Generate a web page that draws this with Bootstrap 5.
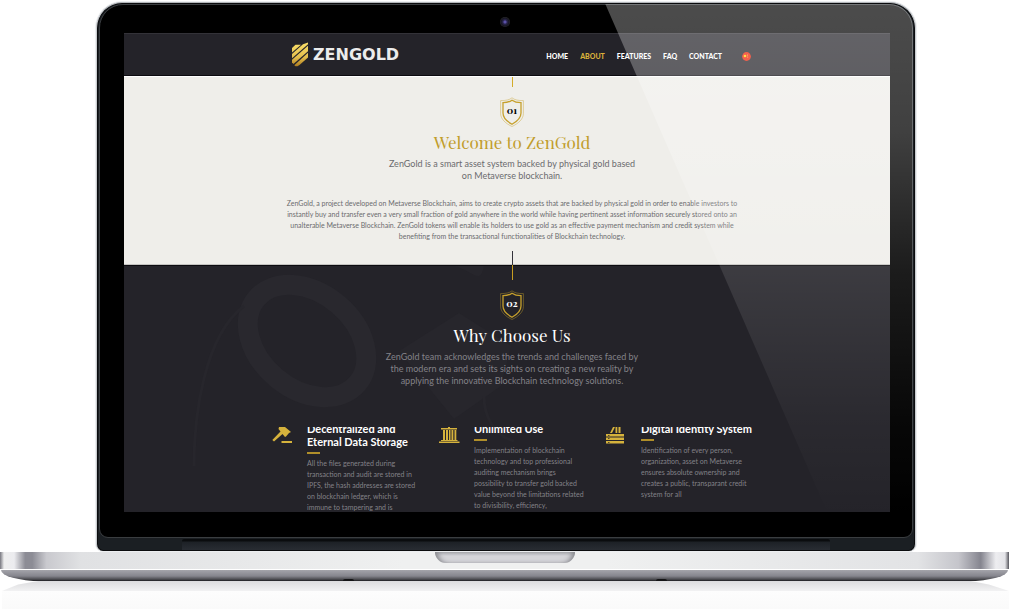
<!DOCTYPE html>
<html lang="en">
<head>
<meta charset="utf-8">
<meta name="viewport" content="width=device-width, initial-scale=1">
<title>ZenGold</title>
<link rel="stylesheet" href="https://cdn.jsdelivr.net/npm/bootstrap@5.3.0/dist/css/bootstrap.min.css">
<style>
:root{--gold:#d3ab28;--ink:#242329;--paper:#efeeea}
body{background:#fff;font-family:"Lato","Open Sans",sans-serif;font-size:7px;line-height:11px;overflow-x:hidden}
/* laptop lid */
.lid{margin:2px 95px 0 96px;background:#1b1f23;border:1px solid #c9cccf;border-top-color:#b4b7bb;border-bottom:0;border-radius:26px 26px 7px 7px;box-shadow:inset 0 0 0 1px #0b0c0e,0 0 0 1px #eceef0}
.bezel{background:#000;margin:1px 2px 0;padding:28px 22px 25px 24px;border:1px solid #3a3d40;border-radius:24px 24px 9px 9px}
.webcam{left:50%;top:14px;width:10px;height:10px;margin-left:-6px;border-radius:50%;background:radial-gradient(circle,#5b51a8 0 1px,#2b2750 2px,#15141f 4px,#2a2a2e 5px)}
.glare{inset:1px 2px 14px 2px;border-radius:0 24px 9px 0;pointer-events:none;clip-path:polygon(62.2% 0,100% 0,100% 100%,90.8% 100%);background:linear-gradient(#ffffff4c 0,#ffffff40 24%,#ffffff1c 50%,#ffffff08 78%,#fff0 96%)}
.hinge{height:13px;padding:1px 85px 0}
.hinge div{height:11px;background:linear-gradient(#0a0c0e 0 2px,#1d2126 3px,#292d33);border-radius:2px 2px 0 0}
/* site */
.site-head{background:var(--ink);height:43px;border-bottom:1px solid #0c0b10;box-shadow:inset 0 1px #333238}
.page-col{width:480px}
.site-head .page-col{padding:1px 1px 0 19px}
.wordmark{font:bold 16px/20px "DejaVu Sans",sans-serif;color:#ececec;text-decoration:none}
.menu a{font-weight:900;font-size:7px;color:#fff;text-decoration:none}
.menu a.active{color:#d9b13b}
.menu-items{gap:12px}
.flag{margin-left:20px}
.gutter-l{padding-left:10px}
.welcome{background:var(--paper);height:189px;border-top:1px solid #fff;border-bottom:1px solid #c4c3c0;color:#6b6b6e}
.why{background:var(--ink);color:#838288;height:247px;border-top:1px solid #0c0b10}
.why-body{padding-top:24px}
.tick{width:1px;margin:0 auto}
.tick-a{height:10px;background:var(--gold)}
.tick-b{top:-15px;left:50%;margin-left:5px;height:29px;background:linear-gradient(#33323a 0 14px,#c79d22 14px)}
.shield-no{width:26px;height:30px;font:bold 10px/26px "Playfair Display","Liberation Serif",serif}
.welcome .shield-no{margin-top:10px}
.shield-no svg{inset:0}
.sec-title{font:400 17px/22px "Playfair Display","Liberation Serif",serif;margin:4px 0 5px}
.sec-gold{color:#c19d2c}
.intro{font-size:9px;line-height:12px}
.copy{font-size:7px;line-height:11px}
.features{height:85px;margin:40px -21px 0 0}
.features svg{width:21px;height:20px;margin-right:14px}
.features h3{font:700 11px/13px "Lato",sans-serif;color:#fff;margin:-5px 0 0}
.dash{width:13px;height:2px;margin:4px 0;background:#b08f2a}
/* base */
.base-top{height:19px;margin-right:2px;border-top:1px solid #fff;border-bottom:1px solid #fff;background:linear-gradient(90deg,#77777f 0,#eee .5%,#e9e9ec 2.5%,#d8d8dc 4.5%,#8c8c95 7%,#8c8c95 9.5%,#c5c5ca 13%,#dcdce0 18%,#eff0f0 45%,#eff0f0 55%,#dfe0e2 85%,#b9b9c0 95%,#85858f 97.3%,#ededf0 98.7%,#e4e4e8 99.6%,#55555c);background:linear-gradient(90deg,#77777f 0,#eee .4%,#ececef 1.4%,#8c8c95 2.5%,#8c8c95 3.2%,#c9c9ce 4.6%,#e0e1e3 8%,#eff0f0 40%,#eff0f0 60%,#e2e3e5 91%,#c5c5cb 95%,#85858f 97.2%,#ededf0 98.7%,#e4e4e8 99.6%,#55555c)}
.notch{width:140px;height:11px;border-radius:0 0 13px 13px;background:linear-gradient(#b5b6ba,#d5d5d9 4px);box-shadow:inset 5px 0 5px -2px #8a8b90,inset -5px 0 5px -2px #8a8b90}
.base-foot{height:11px;margin:0 3px 0 1px;background:linear-gradient(#a4a4aa,#85858d 55%,#4b4b50 85%,#1d1d20);border-radius:0 0 40px 40px/0 0 11px 11px}
.foot{bottom:0;width:11px;height:2px;border-radius:6px 6px 0 0;background:#141416}
.foot-l{left:34%}
.foot-r{left:65%}
.mirror{height:10px;margin:0 2px;background:linear-gradient(#dcdcde,#f2f2f3);clip-path:polygon(3.6% 0,96.2% 0,98% 35%,100% 100%,0 100%,1.6% 35%)}
.mirror-fade{height:18px;background:linear-gradient(#fdfdfd,#fafafa);margin:0 2px}
</style>
<script src="https://cdn.jsdelivr.net/npm/bootstrap@5.3.0/dist/js/bootstrap.bundle.min.js"></script>
</head>
<body>
<svg class="d-none" aria-hidden="true">
  <symbol id="shield" viewBox="0 0 26 30">
    <path d="M13 3.200C10.500 5 7 5.600 4 5.600V16c0 5 4 8.500 9 11.300 5-2.800 9-6.300 9-11.300V5.600c-3 0-6.500-.6-9-2.400z" fill="none" stroke="#c6a02c" stroke-width="1.300"/>
    <path d="M13 .8C10.500 3 6.500 3.600 1.600 3.600V16.500c0 5.500 5 10 11.400 13 6.400-3 11.400-7.500 11.400-13V3.600C19.500 3.600 15.500 3 13 .8z" fill="none" stroke="#c6a02c" stroke-width=".7" opacity=".6"/>
  </symbol>
</svg>
<div class="lid position-relative">
  <div class="bezel">
    <span class="webcam position-absolute"></span>
    <div class="screen overflow-hidden">
      <header class="site-head gutter-l">
        <div class="page-col mx-auto h-100 d-flex align-items-center">
          <a class="wordmark d-flex align-items-center" href="#">
            <svg class="me-1" width="18" height="25" viewBox="0 0 18 25" aria-hidden="true">
              <defs><linearGradient id="au" gradientUnits="userSpaceOnUse" x1="0" y1="0" x2="0" y2="25"><stop stop-color="#fbe06a"/><stop offset=".6" stop-color="#e5c04e"/><stop offset="1" stop-color="#a9771c"/></linearGradient></defs>
              <g fill="url(#au)"><path d="M1 10.500V6l3.500-3.200H10z"/><path d="M1 16.200v-4.200L12 2.300 17 .5v1.800z"/><path d="M1 20.500v-2.800L17 3.800v5.400L2.500 22z"/><path d="M3.300 23.200 17 10.800v4.700L8.500 23 6.500 24.200H4.500z"/></g>
            </svg><span>ZENGOLD</span>
          </a>
          <nav class="menu d-flex align-items-center ms-auto pt-1">
            <div class="d-flex menu-items">
              <a href="#">HOME</a><a class="active" href="#">ABOUT</a><a href="#">FEATURES</a><a href="#">FAQ</a><a href="#">CONTACT</a>
            </div>
            <a class="flag d-flex" href="#" aria-label="Chinese"><svg width="9" height="9" viewBox="0 0 9 9"><circle cx="4.500" cy="4.500" r="4.400" fill="#ee2408"/><circle cx="3" cy="4" r="1.300" fill="#ffd400"/><circle cx="5.500" cy="3" r=".5" fill="#ffd83b"/><circle cx="5.700" cy="5" r=".5" fill="#ffd83b"/></svg></a>
          </nav>
        </div>
      </header>
      <section class="welcome gutter-l text-center">
        <div class="tick tick-a"></div>
        <div class="shield-no position-relative mx-auto text-black"><svg class="position-absolute" width="26" height="30"><use href="#shield"/></svg>01</div>
        <h2 class="sec-title sec-gold">Welcome to ZenGold</h2>
        <p class="intro mb-3">ZenGold is a smart asset system backed by physical gold based<br>on Metaverse blockchain.</p>
        <p class="copy mb-0">ZenGold, a project developed on Metaverse Blockchain, aims to create crypto assets that are backed by physical gold in order to enable investors to<br>instantly buy and transfer even a very small fraction of gold anywhere in the world while having pertinent asset information securely stored onto an<br>unalterable Metaverse Blockchain. ZenGold tokens will enable its holders to use gold as an effective payment mechanism and credit system while<br>benefiting from the transactional functionalities of Blockchain technology.</p>
      </section>
      <section class="why gutter-l text-center position-relative">
        <svg class="position-absolute top-0 start-0 w-100 h-100" viewBox="0 0 766 247" preserveAspectRatio="xMinYMin slice" aria-hidden="true" fill="none">
          <ellipse cx="183" cy="75" rx="48" ry="66" transform="rotate(-50 183 75)" stroke="#29282e" stroke-width="20"/>
          <path d="M330 0c20 5 26 20 30 0h-30zM275 85l60-38 52 33-10 40-47 33z" fill="#27262c"/>
          <path d="M70 200C70 150 80 70 120 40M360 130c0 20 10 40 30 45" stroke="#27262c" stroke-width="3"/>
        </svg>
        <div class="tick tick-b position-absolute"></div>
        <div class="why-body position-relative">
          <div class="shield-no position-relative mx-auto text-white"><svg class="position-absolute" width="26" height="30"><use href="#shield"/></svg>02</div>
          <h2 class="sec-title text-white">Why Choose Us</h2>
          <p class="intro mb-0">ZenGold team acknowledges the trends and challenges faced by<br>the modern era and sets its sights on creating a new reality by<br>applying the innovative Blockchain technology solutions.</p>
          <div class="page-col mx-auto">
            <div class="features overflow-hidden d-flex text-start">
              <div class="d-flex col-4">
                <svg class="flex-shrink-0" viewBox="0 0 21 20" fill="#d5b23c" aria-hidden="true"><path d="M7 0h6l6 5-2 1-3 3.500-1 .5-2.500-3L2 14.500.3 13 8.500 4.500 6.500 2z"/><path d="M9.500 14h10.500v2H9.500z"/></svg>
                <div><h3>Decentralized and<br>Eternal Data Storage</h3><div class="dash"></div><p class="copy mb-0">All the files generated during<br>transaction and audit are stored in<br>IPFS, the hash addresses are stored<br>on blockchain ledger, which is<br>immune to tampering and is</p></div>
              </div>
              <div class="d-flex col-4">
                <svg class="flex-shrink-0" viewBox="0 0 21 20" fill="#d5b23c" aria-hidden="true"><path d="M9 0h2v1h7v1.500H2V1h7zM4 3h2v10H4zM7 3h2v10H7zM10 3h1.500v10H10zM12.500 3h1.800v10h-1.800zM15.500 3h1.800v10h-1.800zM2 13h16.500v1H2zM0 14.500h20.500V16H0z"/></svg>
                <div><h3>Unlimited Use</h3><div class="dash"></div><p class="copy mb-0">Implementation of blockchain<br>technology and top professional<br>auditing mechanism brings<br>possibility to transfer gold backed<br>value beyond the limitations related<br>to divisibility, efficiency,</p></div>
              </div>
              <div class="d-flex col-4">
                <svg class="flex-shrink-0" viewBox="0 0 21 20" fill="#d5b23c" aria-hidden="true"><path d="M7 0h2L6 6H4zM9.500 0h1.800v6H9.500zM12.500 0h2v6h-2z"/><path d="M0 7h18v2.500H0zM0 10.500h18V13H0zM0 14h18v2.500H0z"/><path d="M2 8h1.500v.7H2zM2 11.300h1.500v.7H2zM2 15h1.500v.7H2z" fill="#242329"/></svg>
                <div><h3>Digital Identity System</h3><div class="dash"></div><p class="copy mb-0">Identification of every person,<br>organization, asset on Metaverse<br>ensures absolute ownership and<br>creates a public, transparant credit<br>system for all</p></div>
              </div>
            </div>
          </div>
        </div>
      </section>
    </div>
  </div>
  <div class="hinge"><div></div></div>
  <div class="glare position-absolute"></div>
</div>
<div class="base-top"><div class="notch mx-auto"></div></div>
<div class="base-foot position-relative"><span class="foot foot-l position-absolute"></span><span class="foot foot-r position-absolute"></span></div>
<div class="mirror"></div>
<div class="mirror-fade"></div>
</body>
</html>
